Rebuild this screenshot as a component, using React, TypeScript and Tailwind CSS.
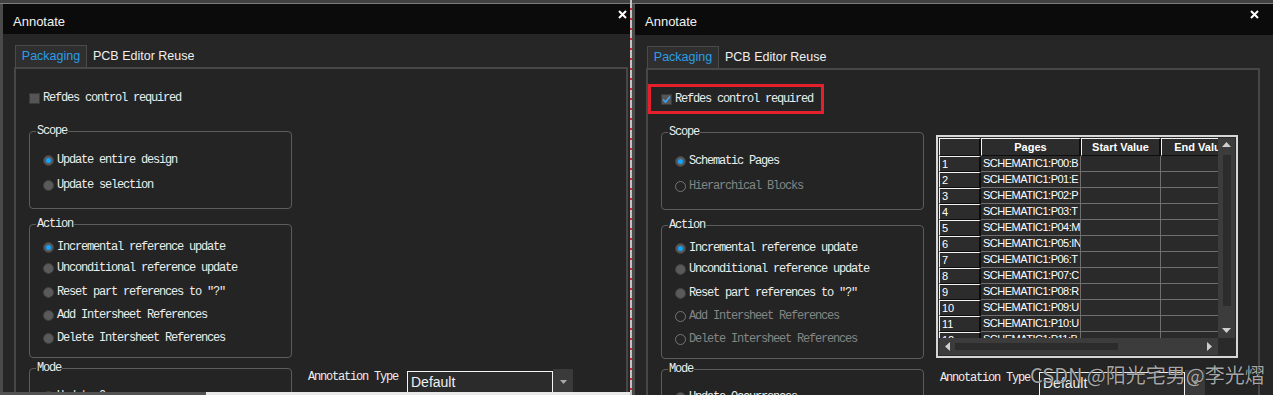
import React from 'react';

const mono = "font-['Liberation_Mono',monospace] text-[12px] tracking-[-1.2px] leading-[12px]";
const sans = "font-['Liberation_Sans',Arial,sans-serif]";
const bevel =
  'flex items-center bg-[#2c2c2c] border-t border-l border-r-2 border-b border-t-[#f2f2f2] border-l-[#f2f2f2] border-r-[#0e0e0e] border-b-[#0e0e0e]';

interface Opt {
  label: string;
  checked?: boolean;
  disabled?: boolean;
  mt: string;
}

const leftScope: Opt[] = [
  { label: 'Update entire design', checked: true, mt: 'mt-[17px]' },
  { label: 'Update selection', mt: 'mt-[13px]' },
];

const rightScope: Opt[] = [
  { label: 'Schematic Pages', checked: true, mt: 'mt-[17px]' },
  { label: 'Hierarchical Blocks', disabled: true, mt: 'mt-[13px]' },
];

const leftAction: Opt[] = [
  { label: 'Incremental reference update', checked: true, mt: 'mt-[11px]' },
  { label: 'Unconditional reference update', mt: 'mt-[9px]' },
  { label: 'Reset part references to "?"', mt: 'mt-[12px]' },
  { label: 'Add Intersheet References', mt: 'mt-[11px]' },
  { label: 'Delete Intersheet References', mt: 'mt-[11px]' },
];

const rightAction: Opt[] = [
  { label: 'Incremental reference update', checked: true, mt: 'mt-[11px]' },
  { label: 'Unconditional reference update', mt: 'mt-[9px]' },
  { label: 'Reset part references to "?"', mt: 'mt-[12px]' },
  { label: 'Add Intersheet References', disabled: true, mt: 'mt-[11px]' },
  { label: 'Delete Intersheet References', disabled: true, mt: 'mt-[11px]' },
];

const pages = [
  'SCHEMATIC1:P00:B',
  'SCHEMATIC1:P01:E',
  'SCHEMATIC1:P02:P',
  'SCHEMATIC1:P03:T',
  'SCHEMATIC1:P04:M',
  'SCHEMATIC1:P05:IN',
  'SCHEMATIC1:P06:T',
  'SCHEMATIC1:P07:C',
  'SCHEMATIC1:P08:R',
  'SCHEMATIC1:P09:U',
  'SCHEMATIC1:P10:U',
  'SCHEMATIC1:P11:B',
];

const Radio: React.FC<Opt> = ({ label, checked, disabled, mt }) => (
  <div className={`flex items-center h-[12px] pl-[13px] ${mt}`}>
    {disabled ? (
      <span className="w-[11px] h-[11px] rounded-full border border-[#747474]" />
    ) : (
      <span className="w-[11px] h-[11px] rounded-full bg-[#5a5a5a] border border-[#404040] flex items-center justify-center">
        {checked && <span className="w-[5px] h-[5px] rounded-full bg-[#12a4ff]" />}
      </span>
    )}
    <span className={`ml-[3px] whitespace-nowrap ${mono} ${disabled ? 'text-[#858585]' : 'text-[#ededed]'}`}>
      {label}
    </span>
  </div>
);

const GroupBox: React.FC<{ title: string; className: string; children?: React.ReactNode }> = ({
  title,
  className,
  children,
}) => (
  <div className={`border border-[#5c5c5c] rounded-[4px] ${className}`}>
    <div className={`-mt-[7px] ml-[6px] w-fit px-[1px] bg-[#242424] text-[#ededed] ${mono}`}>{title}</div>
    {children}
  </div>
);

const PageTable = () => (
  <div className="mt-[3px] w-[302px] h-[223px] border-2 border-[#d6d6d6] p-[1px] bg-[#2a2a2a] flex flex-col">
    <div className="flex h-[200px]">
      <div className={`w-[279px] overflow-hidden text-[11px] text-white ${sans}`}>
        {/* Header */}
        <div className="flex h-[18px] w-max">
          <div className={`${bevel} w-[42px]`} />
          <div className={`${bevel} w-[100px] justify-center font-bold`}>Pages</div>
          <div className={`${bevel} w-[80px] justify-center font-bold`}>Start Value</div>
          <div className={`${bevel} w-[80px] justify-center font-bold whitespace-nowrap`}>End Value</div>
        </div>
        {pages.map((p, i) => (
          <div key={p} className="flex h-[16px] w-max">
            <div className={`${bevel} w-[42px] pl-[2px]`}>{i + 1}</div>
            <div className="w-[100px] border-r border-b border-[#6e6e6e] pl-[2px] flex items-center overflow-hidden whitespace-nowrap tracking-[-0.5px]">
              {p}
            </div>
            <div className="w-[80px] border-r border-b border-[#6e6e6e]" />
            <div className="w-[80px] border-r border-b border-[#6e6e6e]" />
          </div>
        ))}
      </div>
      {/* Vertical scrollbar */}
      <div className="w-[17px] bg-[#3c3c3c] flex flex-col items-center pt-[4px] pb-[5px]">
        <svg width="9" height="5" viewBox="0 0 9 5">
          <path d="M0 5L4.5 0L9 5Z" fill="#cfcfcf" />
        </svg>
        <div className="mt-[8px] w-[8px] h-[151px] bg-[#2c2c2c]" />
        <svg className="mt-auto" width="9" height="5" viewBox="0 0 9 5">
          <path d="M0 0L9 0L4.5 5Z" fill="#cfcfcf" />
        </svg>
      </div>
    </div>
    {/* Horizontal scrollbar */}
    <div className="flex h-[17px]">
      <div className="w-[279px] bg-[#3c3c3c] flex items-center px-[6px]">
        <svg width="5" height="9" viewBox="0 0 5 9">
          <path d="M5 0L5 9L0 4.5Z" fill="#cfcfcf" />
        </svg>
        <div className="ml-[5px] w-[163px] h-[7px] bg-[#2c2c2c]" />
        <svg className="ml-auto" width="5" height="9" viewBox="0 0 5 9">
          <path d="M0 0L5 4.5L0 9Z" fill="#cfcfcf" />
        </svg>
      </div>
      <div className="w-[17px] bg-[#2a2a2a]" />
    </div>
  </div>
);

const AnnotationRow = () => (
  <div className="mt-[14px] flex items-start pl-[4px]">
    <span className={`w-[99px] whitespace-nowrap text-[#ededed] ${mono}`}>Annotation Type</span>
    <div
      className={`w-[146px] h-[24px] border border-b-0 border-[#f4f4f4] bg-[#2b2b2b] pl-[3px] pt-[1px] text-[14px] leading-[18px] text-[#f0f0f0] ${sans}`}
    >
      Default
    </div>
    <div className="-mt-[2px] w-[20px] h-[26px] bg-[#3a3a3a] flex justify-center pt-[11px]">
      <svg width="7" height="4" viewBox="0 0 7 4">
        <path d="M0 0L7 0L3.5 4Z" fill="#a8a8a8" />
      </svg>
    </div>
  </div>
);

const Dialog: React.FC<{ right?: boolean }> = ({ right }) => (
  <div className={`flex flex-col h-full shrink-0 ${right ? 'w-[641px]' : 'w-[630px]'}`}>
    <div className="h-[4px] bg-[#414141] border-b border-[#7c7c7c]" />
    <div className="flex-1 min-h-0 flex flex-col border-l-[3px] border-[#4a4a4a] overflow-hidden">
      {/* Title bar */}
      <div
        className={`flex items-start justify-between bg-[#0b0b0b] pl-[10px] ${
          right ? 'h-[31px] pr-[14px]' : 'h-[30px] pr-[3px]'
        }`}
      >
        <span className={`mt-[10px] leading-[16px] text-[13px] text-[#f2f2f2] ${sans}`}>Annotate</span>
        <svg className="mt-[6px]" width="9" height="9" viewBox="0 0 9 9">
          <path d="M1 1L8 8M8 1L1 8" stroke="#ffffff" strokeWidth="2" />
        </svg>
      </div>

      <div className="flex-1 min-h-0 flex flex-col bg-[#262626] pt-[11px]">
        {/* Tabs */}
        <div className={`ml-[12px] flex items-center h-[22px] text-[12.5px] ${sans}`}>
          <div className="w-[72px] h-[22px] flex items-center justify-center bg-[#2f2f2f] border border-b-0 border-[#4a4a4a] text-[#2a9ee6]">
            Packaging
          </div>
          <div className="ml-[6px] text-[#f0f0f0]">PCB Editor Reuse</div>
        </div>

        {/* Panel */}
        <div className="ml-[11px] w-[614px] flex-1 min-h-0 border-2 border-b-0 border-[#474747] bg-[#242424] pt-[14px]">
          <div
            className={`w-[176px] h-[30px] border-[3px] flex items-center pl-[10px] ${
              right ? 'border-[#e3202b]' : 'border-transparent'
            }`}
          >
            <span className="w-[11px] h-[11px] bg-[#555555] border border-[#3a3a3a] flex items-center justify-center">
              {right && (
                <svg width="9" height="9" viewBox="0 0 9 9">
                  <path d="M1 4.5L3.5 7L8 1.5" stroke="#3aa6f5" strokeWidth="1.6" fill="none" />
                </svg>
              )}
            </span>
            <span className={`ml-[3px] whitespace-nowrap text-[#ededed] ${mono}`}>Refdes control required</span>
          </div>

          <div className="mt-[18px] flex pl-[13px]">
            <div className="w-[263px] flex flex-col">
              <GroupBox title="Scope" className="h-[78px]">
                {(right ? rightScope : leftScope).map((o) => (
                  <Radio key={o.label} {...o} />
                ))}
              </GroupBox>
              <GroupBox title="Action" className="mt-[15px] h-[134px]">
                {(right ? rightAction : leftAction).map((o) => (
                  <Radio key={o.label} {...o} />
                ))}
              </GroupBox>
              <GroupBox title="Mode" className="mt-[10px] h-[60px]">
                <Radio label="Update Occurrences" mt="mt-[16px]" />
              </GroupBox>
            </div>

            <div className="ml-[12px] w-[302px] flex flex-col">
              {right ? <PageTable /> : <div className="h-[226px]" />}
              <AnnotationRow />
            </div>
          </div>
        </div>
      </div>
    </div>
    {!right && (
      <div className="h-[3px] flex">
        <div className="w-[206px] bg-[#525252]" />
        <div className="flex-1 bg-[#e8e8e8]" />
      </div>
    )}
  </div>
);

export default function App() {
  return (
    <div className="relative w-[1273px] h-[395px] overflow-hidden bg-[#262626] flex">
      <Dialog />
      <div className="w-[2px] h-full shrink-0 bg-[repeating-linear-gradient(to_bottom,#c4c4c4_0px,#c4c4c4_8px,#d42a2a_8px,#d42a2a_10px)]" />
      <Dialog right />
      {/* Watermark */}
      <div className="absolute left-[1030px] top-[361px] whitespace-nowrap text-[20px] leading-[28px] text-[#c4c4c4]/85 font-['Noto_Sans_CJK_SC',sans-serif] [text-shadow:0_0_1px_#000]">
        CSDN @阳光宅男@李光熠
      </div>
    </div>
  );
}
